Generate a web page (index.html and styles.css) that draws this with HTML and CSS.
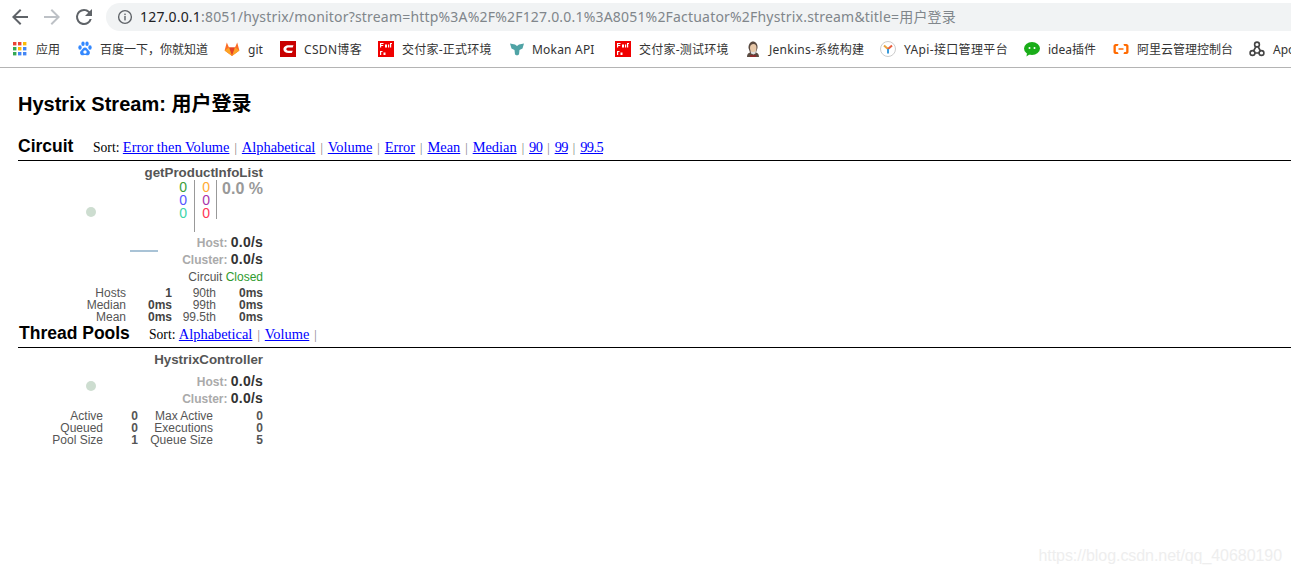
FILE: index.html
```html
<!DOCTYPE html>
<html lang="zh">
<head>
<meta charset="utf-8">
<title>Hystrix Stream: 用户登录</title>
<link rel="stylesheet" href="styles.css">
</head>
<body>
<header class="chrome">
  <div class="toolbar">
    <svg class="nav" viewBox="0 0 24 24" width="24" height="24"><path d="M20 11H7.8l5.6-5.6L12 4l-8 8 8 8 1.4-1.4L7.8 13H20z" fill="#5f6368"/></svg>
    <svg class="nav" viewBox="0 0 24 24" width="24" height="24"><path d="M4 11h12.2l-5.6-5.6L12 4l8 8-8 8-1.4-1.4 5.6-5.6H4z" fill="#bdc1c6"/></svg>
    <svg class="nav" viewBox="0 0 24 24" width="24" height="24"><path d="M17.65 6.35A7.95 7.95 0 0 0 12 4a8 8 0 1 0 7.73 10h-2.08A6 6 0 1 1 12 6c1.66 0 3.14.69 4.22 1.78L13 11h7V4z" fill="#5f6368"/></svg>
    <div class="omnibox">
      <svg class="info" viewBox="0 0 16 16" width="16" height="16"><circle cx="8" cy="8" r="6.4" fill="none" stroke="#5f6368" stroke-width="1.4"/><rect x="7.3" y="7" width="1.4" height="4.4" fill="#5f6368"/><rect x="7.3" y="4.6" width="1.4" height="1.5" fill="#5f6368"/></svg>
      <span class="url"><span class="host">127.0.0.1</span>:8051/hystrix/monitor?stream=http%3A%2F%2F127.0.0.1%3A8051%2Factuator%2Fhystrix.stream&amp;title=用户登录</span>
    </div>
  </div>
  <nav class="bookmarks">
    <span class="bm bm-apps"><svg viewBox="0 0 14 14" width="14" height="14"><rect x="0" y="0" width="3.4" height="3.4" fill="#ea4335"/><rect x="5" y="0" width="3.4" height="3.4" fill="#ea4335"/><rect x="10" y="0" width="3.4" height="3.4" fill="#fbbc05"/><rect x="0" y="5" width="3.4" height="3.4" fill="#34a853"/><rect x="5" y="5" width="3.4" height="3.4" fill="#fbbc05"/><rect x="10" y="5" width="3.4" height="3.4" fill="#4285f4"/><rect x="0" y="10" width="3.4" height="3.4" fill="#34a853"/><rect x="5" y="10" width="3.4" height="3.4" fill="#4285f4"/><rect x="10" y="10" width="3.4" height="3.4" fill="#4285f4"/></svg>应用</span>
    <span class="bm bm-baidu"><svg viewBox="0 0 16 16" width="16" height="16"><g fill="#3388ff"><ellipse cx="3" cy="6.5" rx="1.7" ry="2.2"/><ellipse cx="6" cy="2.8" rx="1.7" ry="2.2"/><ellipse cx="10" cy="2.8" rx="1.7" ry="2.2"/><ellipse cx="13" cy="6.5" rx="1.7" ry="2.2"/><path d="M8 6.5c-2 0-2.6 2-4 3.2-1.6 1.4-1 4.8 1.8 4.6 1-.1 1.4-.3 2.2-.3s1.2.2 2.2.3c2.8.2 3.4-3.2 1.8-4.6-1.4-1.2-2-3.2-4-3.2z"/></g><circle cx="8" cy="11" r="1.7" fill="#fff"/></svg>百度一下，你就知道</span>
    <span class="bm bm-git"><svg viewBox="0 0 16 16" width="16" height="16"><path d="M8 15 .6 9.6 2.8 1.6 5 6.5h6l2.2-4.9 2.2 8z" fill="#fc6d26"/><path d="M8 15 5 6.5h6z" fill="#e24329"/><path d="M8 15 .6 9.6 5 6.5z" fill="#fca326"/><path d="M8 15l7.4-5.4L11 6.5z" fill="#fca326"/></svg>git</span>
    <span class="bm bm-csdn"><svg viewBox="0 0 16 16" width="16" height="16"><rect width="16" height="16" fill="#c90000"/><path d="M13.5 4.2H8.6C5.6 4.2 3.4 6 3.4 8.2s2.2 3.8 5.2 3.8h3.2l1-2.3H8.800c-1.400 0-2.500-.6-2.500-1.500s1.100-1.600 2.500-1.600h3.900z" fill="#fff"/></svg>CSDN博客</span>
    <span class="bm bm-jfj"><svg viewBox="0 0 16 16" width="16" height="16"><rect width="16" height="16" fill="#f00000"/><path d="M2 2h3.500v1H3.200v1h2v1h-2v1.500H2zM7 3.500h2v3H7zM10 3.500h1.200v3H10zM12 2h2v1h-.8v3.500H12zM2 10h2.500v1H3.200v3H2zM5.500 11.500h2v2.500h-2z" fill="#fff"/></svg>交付家-正式环境</span>
    <span class="bm bm-mokan"><svg viewBox="0 0 16 16" width="16" height="16"><path d="M1 2.500l5 1 2 1.500 2-1.500 5-1-1.500 5-3 1.500-.5 4.500-2 1-2-1-.5-4.500-3-1.500z" fill="#4fa3a5"/></svg>Mokan API</span>
    <span class="bm bm-jfj2"><svg viewBox="0 0 16 16" width="16" height="16"><rect width="16" height="16" fill="#f00000"/><path d="M2 2h3.500v1H3.200v1h2v1h-2v1.500H2zM7 3.500h2v3H7zM10 3.500h1.200v3H10zM12 2h2v1h-.8v3.500H12zM2 10h2.500v1H3.200v3H2zM5.500 11.500h2v2.500h-2z" fill="#fff"/></svg>交付家-测试环境</span>
    <span class="bm bm-jenkins"><svg viewBox="0 0 16 16" width="16" height="16"><path d="M2 16c0-3 1.500-4 3-4.500L3.500 7c0-4 2-6.500 4.500-6.500S13 3 12.500 7L11 11.500c1.500.5 3 1.500 3 4.500z" fill="#5a4a40"/><path d="M5 7c0-3 1.500-4 3.500-4s3 1.500 3 4-1 5-3 5-3.500-2-3.500-5z" fill="#e8c8a8"/><path d="M5.500 9.500c1 2 4.500 2 5.500 0l-.5 3-2 1-2.500-1z" fill="#ddd"/><rect x="5" y="14" width="6" height="2" fill="#8a2c2c"/></svg>Jenkins-系统构建</span>
    <span class="bm bm-yapi"><svg viewBox="0 0 16 16" width="16" height="16"><circle cx="8" cy="8" r="7.500" fill="#fff" stroke="#ccc"/><path d="M4 4.500 8 8" stroke="#e8a33d" stroke-width="2" fill="none"/><path d="M12 4.500 8 8" stroke="#e85d3d" stroke-width="2" fill="none"/><path d="M8 8v4.500" stroke="#3a9ad9" stroke-width="2" fill="none"/></svg>YApi-接口管理平台</span>
    <span class="bm bm-idea"><svg viewBox="0 0 16 16" width="16" height="16"><ellipse cx="8" cy="7.500" rx="8" ry="6.500" fill="#1aad19"/><path d="M3 12l-.5 3.500L6 13z" fill="#1aad19"/><circle cx="5.500" cy="7" r="1" fill="#fff"/><circle cx="10.500" cy="7" r="1" fill="#fff"/></svg>idea插件</span>
    <span class="bm bm-ali"><svg viewBox="0 0 16 16" width="16" height="16"><path d="M5.500 3H2.500C1.500 3 .5 4 .5 5v6c0 1 1 2 2 2h3l-.5-1.700-2.200-.6V5.300L5 4.700zM10.500 3h3c1 0 2 1 2 2v6c0 1-1 2-2 2h-3l.5-1.700 2.200-.6V5.300L11 4.700zM5.500 7.300h5v1.400h-5z" fill="#ff6a00"/></svg>阿里云管理控制台</span>
    <span class="bm bm-apo"><svg viewBox="0 0 16 16" width="16" height="16"><g fill="none" stroke="#444" stroke-width="1.600"><circle cx="8" cy="3.500" r="2.400"/><circle cx="3.500" cy="12" r="2.400"/><circle cx="12.500" cy="12" r="2.400"/><path d="M7 5.500 4.500 10M9 5.500l2.500 4.500M6 12h4"/></g></svg>Apollo</span>
  </nav>
</header>

<main class="page">
  <h2 class="stream-title">Hystrix Stream: 用户登录</h2>

  <section class="section section-circuit">
    <div class="section-head">
      <h3 class="section-title">Circuit</h3>
      <div class="sort">Sort: <a href="#a" class="link">Error then Volume</a><i class="sep">|</i><a href="#b" class="link">Alphabetical</a><i class="sep">|</i><a href="#c" class="link">Volume</a><i class="sep">|</i><a href="#d" class="link">Error</a><i class="sep">|</i><a href="#e" class="link">Mean</a><i class="sep">|</i><a href="#f" class="link">Median</a><i class="sep">|</i><a href="#g" class="link link-num">90</a><i class="sep">|</i><a href="#h" class="link link-num">99</a><i class="sep">|</i><a href="#i" class="link link-num">99.5</a></div>
    </div>
    <div class="monitor monitor-circuit">
      <span class="dot dot-circuit"></span>
      <span class="spark"></span>
      <div class="name">getProductInfoList</div>
      <div class="counters">
        <div class="count-col count-a"><span class="c-green">0</span><span class="c-blue">0</span><span class="c-teal">0</span></div>
        <div class="count-col count-b"><span class="c-orange">0</span><span class="c-purple">0</span><span class="c-red">0</span></div>
        <div class="rate">0.0 %</div>
      </div>
      <div class="rps"><span class="rps-label">Host:</span> <b>0.0/s</b></div>
      <div class="rps"><span class="rps-label">Cluster:</span> <b>0.0/s</b></div>
      <div class="status">Circuit <span class="closed">Closed</span></div>
      <div class="stats stats-circuit">
        <span>Hosts</span><b>1</b><span>90th</span><b>0ms</b>
        <span>Median</span><b>0ms</b><span>99th</span><b>0ms</b>
        <span>Mean</span><b>0ms</b><span>99.5th</span><b>0ms</b>
      </div>
    </div>
  </section>

  <section class="section section-pools">
    <div class="section-head">
      <h3 class="section-title">Thread Pools</h3>
      <div class="sort">Sort: <a href="#j" class="link">Alphabetical</a><i class="sep">|</i><a href="#k" class="link">Volume</a><i class="sep">|</i></div>
    </div>
    <div class="monitor monitor-pool">
      <span class="dot dot-pool"></span>
      <div class="name">HystrixController</div>
      <div class="rps rps-pool"><span class="rps-label">Host:</span> <b>0.0/s</b></div>
      <div class="rps"><span class="rps-label">Cluster:</span> <b>0.0/s</b></div>
      <div class="stats stats-pool">
        <span>Active</span><em>0</em><span>Max Active</span><em>0</em>
        <span>Queued</span><em>0</em><span>Executions</span><em>0</em>
        <span>Pool Size</span><em>1</em><span>Queue Size</span><em>5</em>
      </div>
    </div>
  </section>
</main>
<div class="watermark">https://blog.csdn.net/qq_40680190</div>
</body>
</html>
```
FILE: styles.css
```css
* { box-sizing: border-box; }
html, body { margin: 0; padding: 0; height: 100%; overflow: hidden; background: #fff; }
body { font-family: "Liberation Sans", "Noto Sans CJK SC", sans-serif; position: relative; }

.chrome { height: 68px; border-bottom: 1px solid #b4b4b4; display: flex; flex-direction: column; }
.toolbar { height: 33px; display: flex; align-items: center; padding-left: 8px; padding-top: 1px; }
.nav { margin-right: 8px; flex: none; }
.omnibox { flex: 1; height: 28px; margin-left: 2px; background: #f1f3f4; border-radius: 14px 0 0 14px; display: flex; align-items: center; padding-left: 11px; overflow: hidden; }
.info { flex: none; margin-right: 7px; }
.url { font: 14px/20px "Noto Sans", "Noto Sans CJK SC", sans-serif; letter-spacing: .19px; color: #80868b; white-space: nowrap; }
.host { color: #202124; }

.bookmarks { height: 34px; display: flex; align-items: center; white-space: nowrap; overflow: hidden; font: 12px/16px "Noto Sans", "Noto Sans CJK SC", sans-serif; color: #333; padding-left: 13px; padding-bottom: 1px; }
.bm { display: flex; align-items: center; flex: none; }
.bm svg { margin-right: 8px; margin-bottom: 2px; flex: none; }
.bm-apps svg { margin-right: 9px; }
.bm-baidu svg { margin-right: 7px; }
.bm-mokan svg { margin-right: 7px; }
.bm-apps { width: 64px; }
.bm-baidu { width: 147px; }
.bm-git { width: 56px; }
.bm-csdn { width: 98px; letter-spacing: .33px; }
.bm-jfj { width: 131px; letter-spacing: .25px; }
.bm-mokan { width: 106px; letter-spacing: .2px; }
.bm-jfj2 { width: 130px; letter-spacing: .25px; }
.bm-jenkins { width: 135px; letter-spacing: .27px; }
.bm-yapi { width: 144px; letter-spacing: .36px; }
.bm-idea { width: 89px; }
.bm-ali { width: 136px; }

.page { padding: 0 0 0 18px; }
.stream-title { margin: 0; padding-top: 25px; height: 64px; font-size: 20px; line-height: 23px; font-weight: bold; color: #000; }
.section-head { display: flex; align-items: flex-end; border-bottom: 1px solid #000; height: 29px; }
.section-title { margin: 0; font-size: 17.5px; line-height: 27px; font-weight: bold; color: #000; }
.section-circuit { height: 188px; }
.section-circuit .section-title { width: 75px; }
.section-pools .section-head { height: 28px; }
.section-pools .section-title { width: 131px; padding-left: 1px; }
.sort { font: 13.6px/16px "Liberation Serif", serif; color: #000; padding-bottom: 4px; }
.link { font-size: 14.4px; color: #00f; text-decoration: underline; }
.link-num { letter-spacing: -.6px; }
.sep { font-style: normal; font-size: 12px; color: #777; margin: 0 5px; }

.monitor { position: relative; width: 245px; text-align: right; color: #333; font-size: 12px; }
.dot { position: absolute; width: 10px; height: 10px; border-radius: 50%; background: #cdddd0; }
.dot-circuit { left: 68px; top: 46px; }
.dot-pool { left: 68px; top: 33px; }
.spark { position: absolute; left: 112px; top: 89px; width: 28px; height: 2px; background: #a9c3d6; }

.name { font-size: 13.33px; font-weight: bold; line-height: 15px; color: #555; padding-top: 4px; height: 19px; }

.counters { display: flex; justify-content: flex-end; height: 54px; font-size: 14px; line-height: 13px; }
.count-col { display: flex; flex-direction: column; height: 39px; text-align: right; }
.count-a { width: 176px; height: 52px; border-right: 1px solid #999; padding-right: 7px; padding-top: 1px; }
.count-b { width: 22px; border-right: 1px solid #999; padding-right: 6px; padding-top: 1px; }
.rate { width: 46px; padding-top: 1px; font-size: 16px; line-height: 16px; font-weight: bold; color: #999; white-space: nowrap; }
.c-green { color: #3a9e3a; }
.c-blue { color: #5555ff; }
.c-teal { color: #3dd5aa; }
.c-orange { color: #ffaa33; }
.c-purple { color: #aa33aa; }
.c-red { color: #ff3355; }

.rps { height: 17px; line-height: 17px; font-size: 12px; color: #999; }
.rps-label { font-weight: bold; color: #aaa; }
.rps b { font-size: 14px; letter-spacing: .2px; color: #333; }
.rps-pool { margin-top: 6px; }
.status { height: 17px; line-height: 18px; color: #555; }
.closed { color: #2e9b2e; }

.stats { display: grid; line-height: 12px; font-size: 12px; color: #555; justify-items: end; }
.stats b { color: #444; font-weight: bold; }
.stats em { font-style: normal; font-weight: bold; color: #555; }
.stats-circuit { grid-template-columns: 108px 46px 44px 47px; margin-top: 2px; }
.stats-pool { grid-template-columns: 85px 35px 75px 50px; margin-top: 3px; }

.watermark { position: absolute; right: 9px; bottom: 9px; font-size: 16px; letter-spacing: -.06px; line-height: 18px; color: #eeeeee; }
```
